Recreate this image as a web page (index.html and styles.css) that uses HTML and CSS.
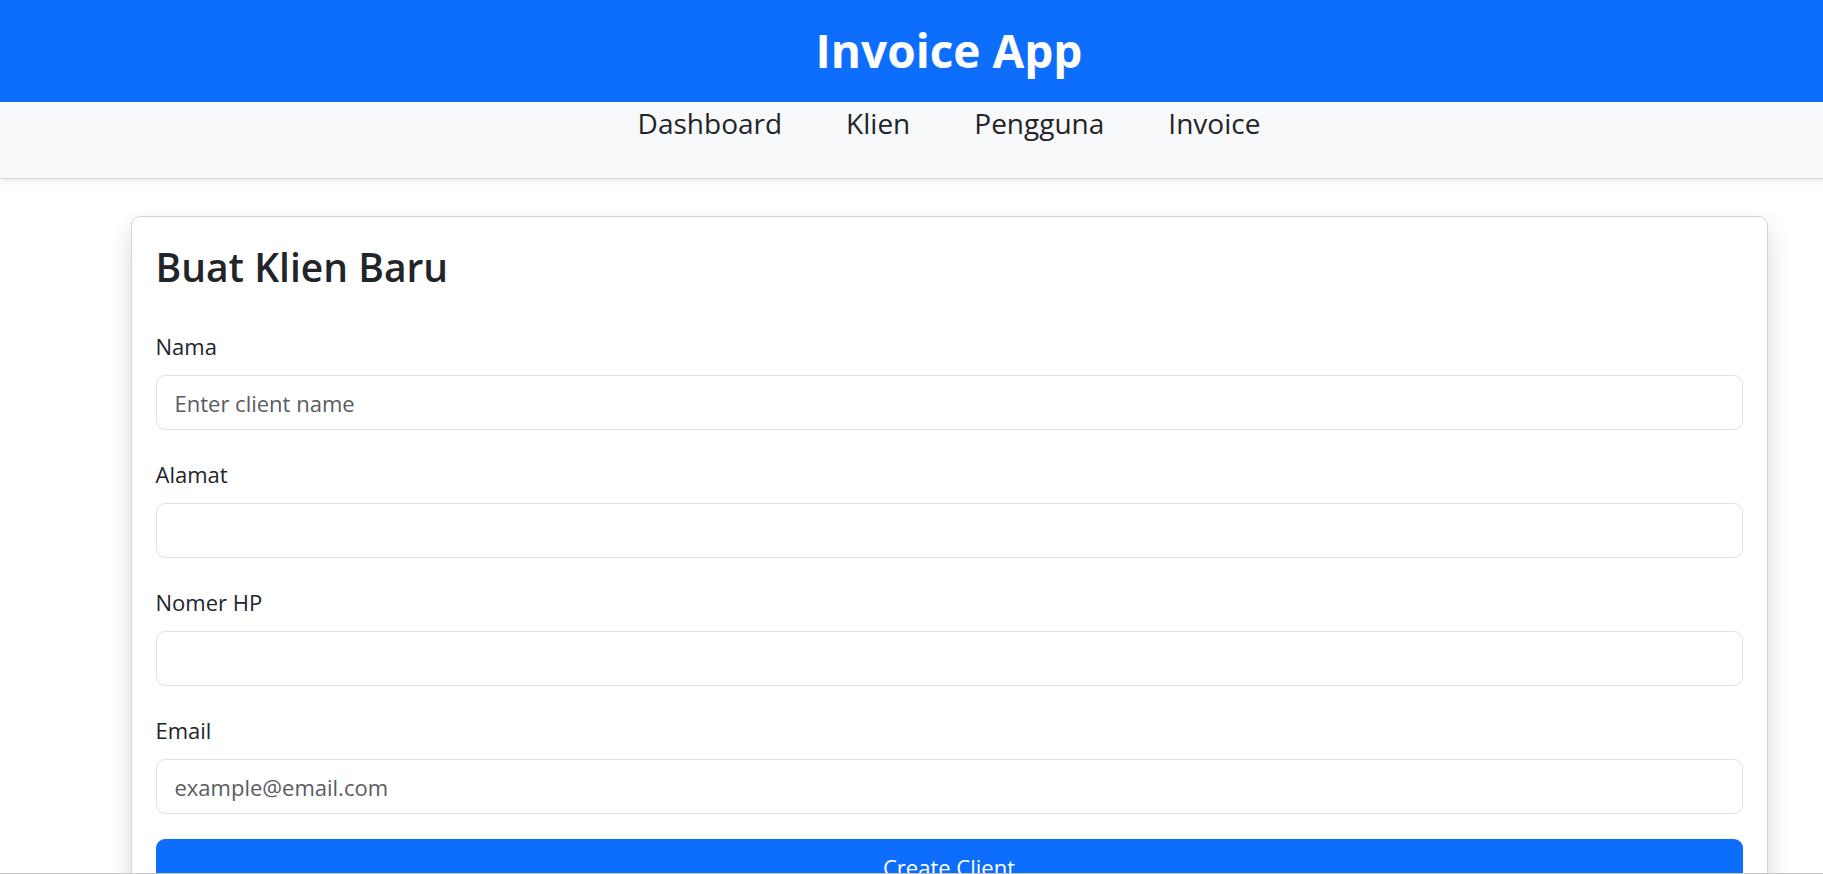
FILE: index.html
```html
<!DOCTYPE html>
<html lang="id">
<head>
<meta charset="utf-8">
<title>Invoice App</title>
<link rel="stylesheet" href="styles.css">
</head>
<body>
<div class="page">
  <header class="app-header">
    <h1 class="app-title">Invoice App</h1>
  </header>
  <nav class="app-nav">
    <a class="nav-link" href="#">Dashboard</a>
    <a class="nav-link" href="#">Klien</a>
    <a class="nav-link" href="#">Pengguna</a>
    <a class="nav-link" href="#">Invoice</a>
  </nav>
  <main class="content">
    <section class="card">
      <h2 class="card-title">Buat Klien Baru</h2>
      <form class="client-form">
        <div class="field">
          <label class="field-label" for="nama">Nama</label>
          <input class="field-input" id="nama" type="text" placeholder="Enter client name">
        </div>
        <div class="field">
          <label class="field-label" for="alamat">Alamat</label>
          <input class="field-input" id="alamat" type="text">
        </div>
        <div class="field">
          <label class="field-label" for="hp">Nomer HP</label>
          <input class="field-input" id="hp" type="text">
        </div>
        <div class="field">
          <label class="field-label" for="email">Email</label>
          <input class="field-input" id="email" type="email" placeholder="example@email.com">
        </div>
        <button class="submit-btn" type="button">Create Client</button>
      </form>
    </section>
  </main>
</div>
<div class="window-edge"></div>
</body>
</html>
```

FILE: styles.css
```css
html, body {
  margin: 0;
  padding: 0;
}

body {
  overflow: hidden;
  background: #ffffff;
  color: #212529;
  font-family: "Open Sans", "Noto Sans", "Liberation Sans", sans-serif;
}

.page {
  width: 1898px;
}

.app-header {
  background: #0d6efd;
  height: 102px;
  box-sizing: border-box;
  padding-top: 22px;
  display: flex;
  justify-content: center;
}

.app-title {
  margin: 0;
  color: #ffffff;
  font-size: 46px;
  font-weight: 700;
  line-height: 56px;
}

.app-nav {
  background: #f8f9fa;
  height: 77px;
  box-sizing: border-box;
  border-bottom: 1px solid #d6d8db;
  box-shadow: 0 3px 6px rgba(0, 0, 0, 0.075);
  display: flex;
  justify-content: center;
  align-items: flex-start;
  gap: 64px;
  position: relative;
}

.nav-link {
  color: #212529;
  text-decoration: none;
  font-size: 28px;
  line-height: 42px;
}

.content {
  padding-top: 37px;
}

.card {
  width: 1637px;
  box-sizing: border-box;
  margin: 0 auto;
  border: 1px solid #d4d5d7;
  border-radius: 9px;
  background: #ffffff;
  padding: 24px 24px 30px;
  box-shadow: 0 12px 24px rgba(0, 0, 0, 0.15);
}

.card-title {
  margin: 0 0 34px;
  font-size: 39px;
  font-weight: 600;
  line-height: 52px;
  color: #212529;
}

.client-form {
  display: flex;
  flex-direction: column;
}

.field {
  display: flex;
  flex-direction: column;
  margin-bottom: 25px;
}

.field-label {
  font-size: 22px;
  line-height: 38px;
  margin-bottom: 10px;
  color: #212529;
}

.field-input {
  height: 55px;
  box-sizing: border-box;
  border: 1px solid #dee2e6;
  border-radius: 9px;
  padding: 0 18px;
  font-family: inherit;
  font-size: 22px;
  color: #212529;
  background: #ffffff;
  outline: none;
}

.field-input::placeholder {
  color: #595c5f;
  opacity: 1;
}

.submit-btn {
  height: 56px;
  border: none;
  border-radius: 9px;
  background: #0d6efd;
  color: #ffffff;
  font-family: inherit;
  font-size: 22px;
  line-height: 36px;
  cursor: pointer;
}

.window-edge {
  position: fixed;
  left: 0;
  right: 0;
  bottom: 0;
  height: 1px;
  background: #c4c4c4;
}
```
